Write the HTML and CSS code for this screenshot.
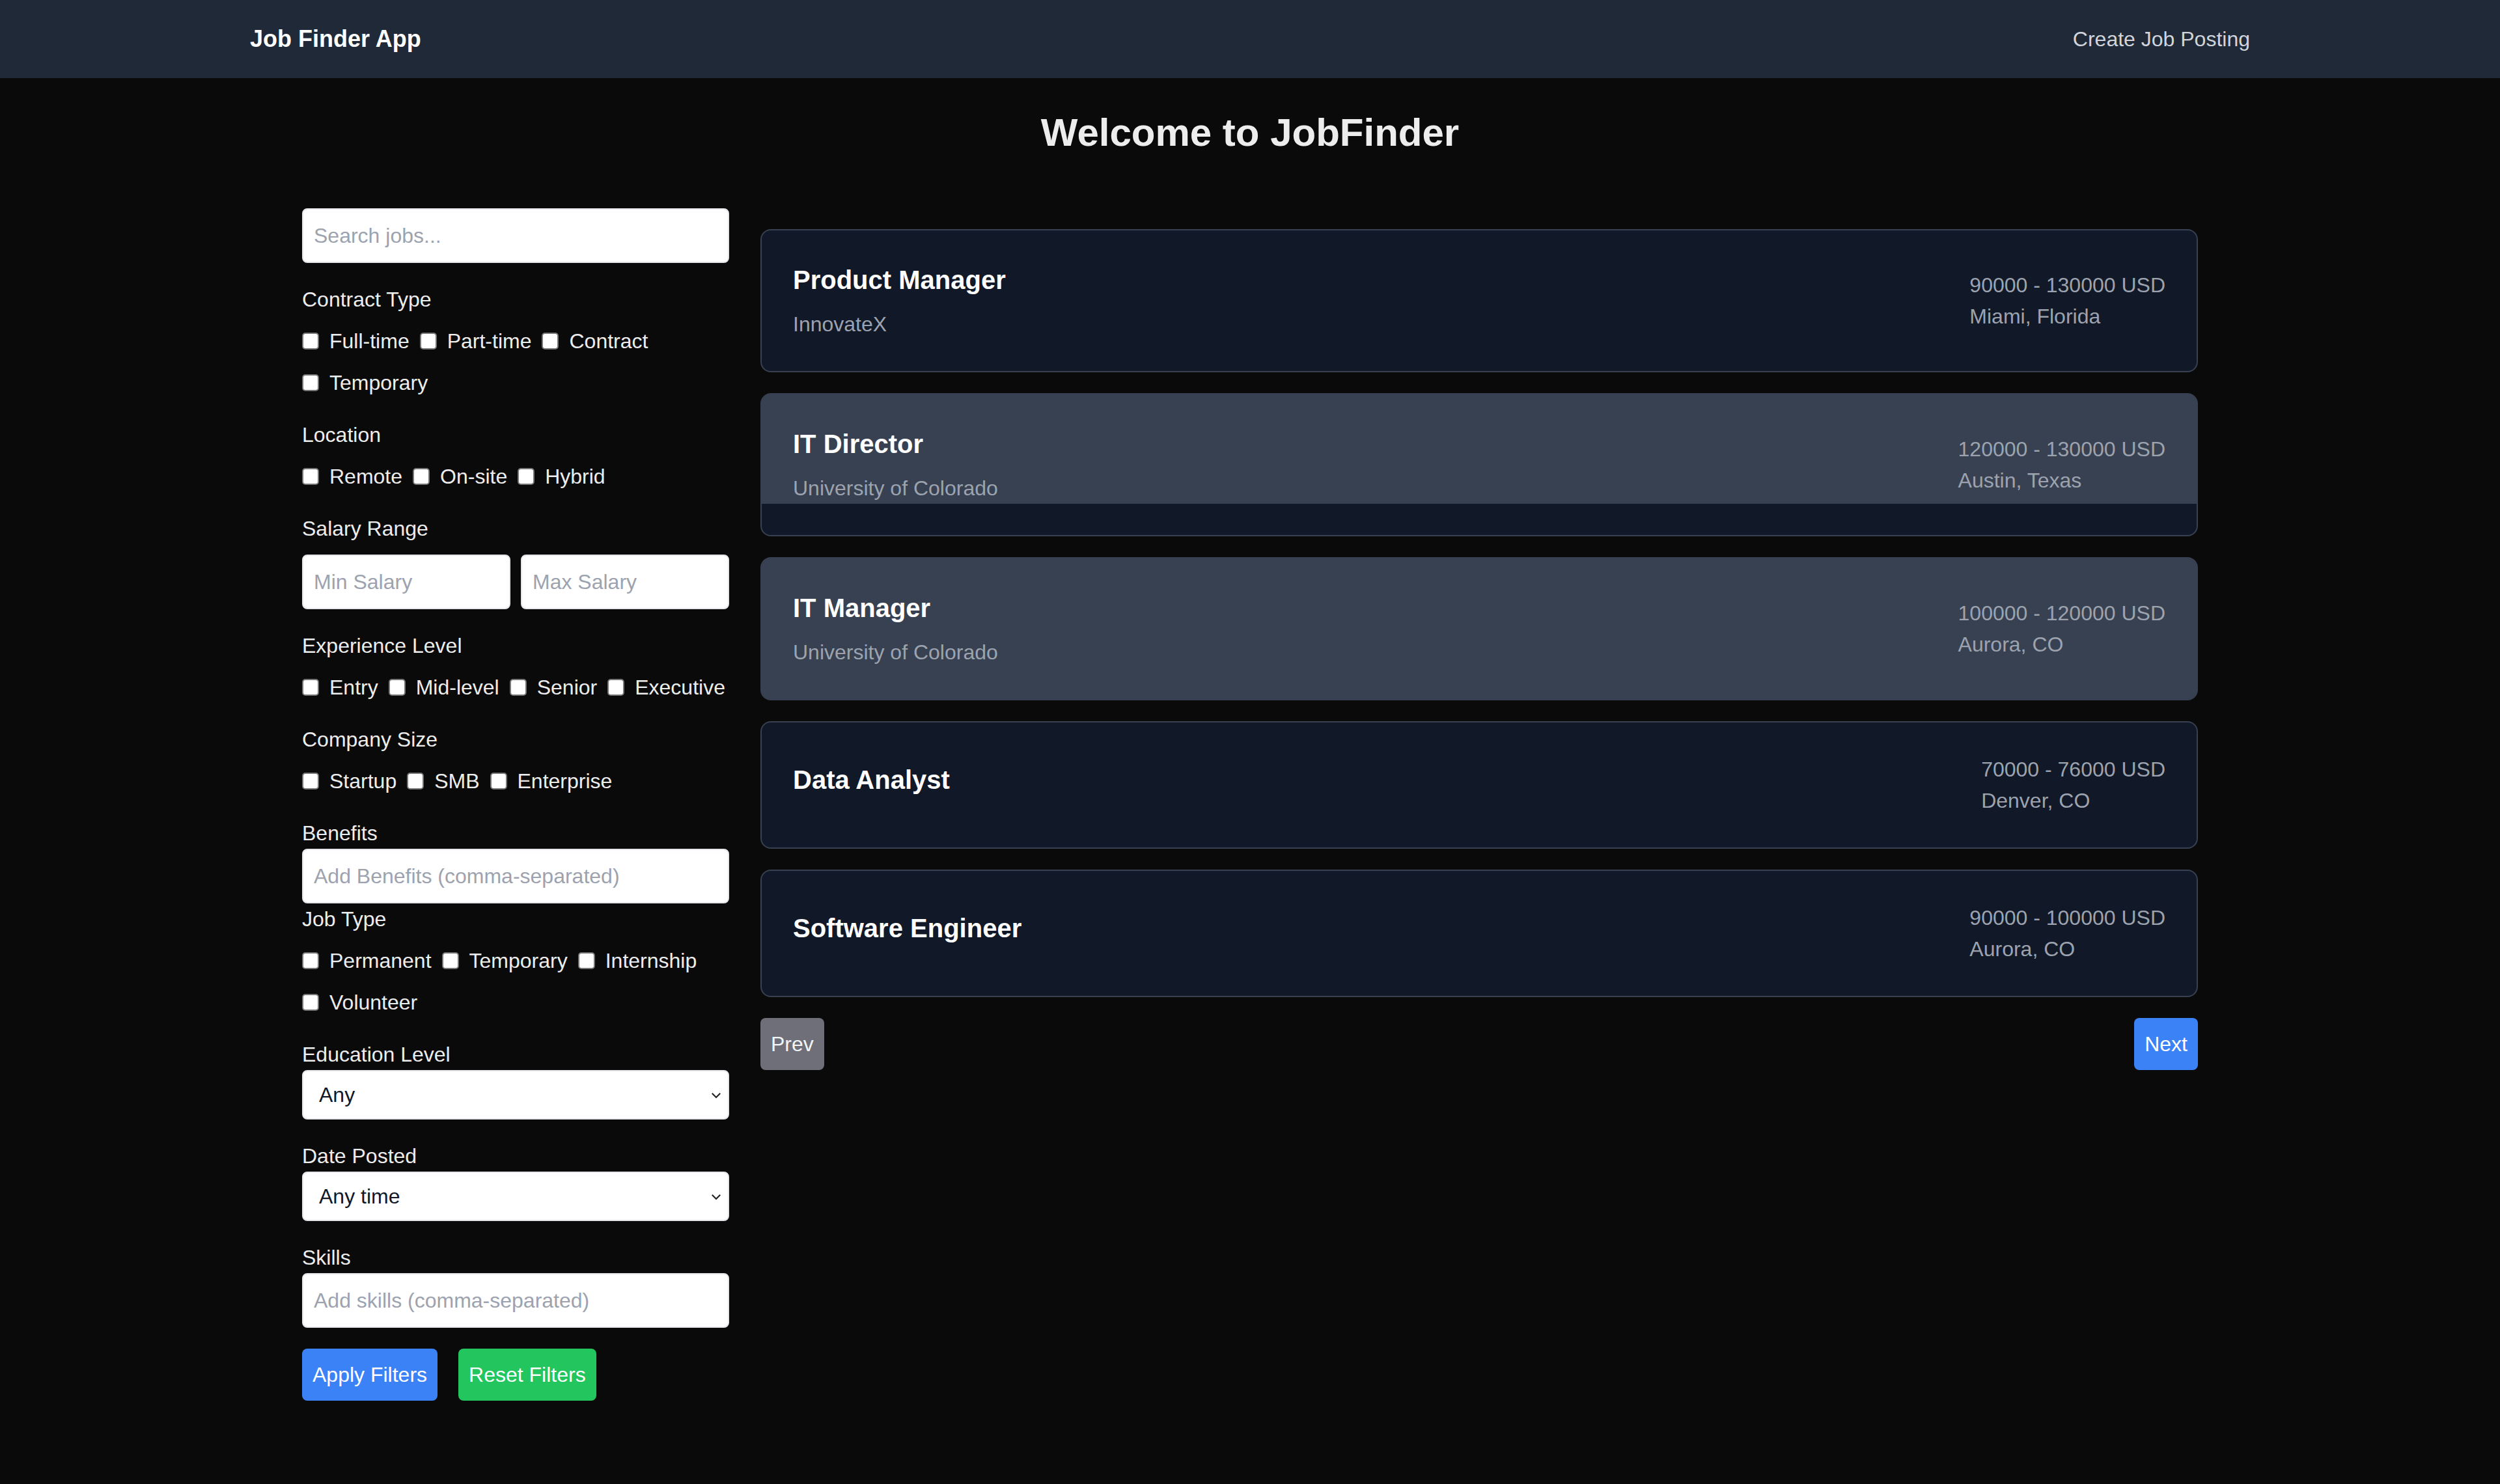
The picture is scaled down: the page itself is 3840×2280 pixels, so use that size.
FILE: index.html
```html
<!DOCTYPE html>
<html lang="en">
<head>
<meta charset="utf-8">
<title>Job Finder App</title>
<link rel="stylesheet" href="styles.css">
</head>
<body>
<nav class="nav">
  <div class="nav-inner">
    <span class="brand">Job Finder App</span>
    <a class="nav-link" href="#">Create Job Posting</a>
  </div>
</nav>
<main class="main">
  <h1 class="title">Welcome to JobFinder</h1>
  <div class="layout">
    <aside class="sidebar">
      <input class="field search" type="text" placeholder="Search jobs...">

      <div class="section">
        <label class="label">Contract Type</label>
        <div class="checks">
          <label class="check"><input type="checkbox">Full-time</label>
          <label class="check"><input type="checkbox">Part-time</label>
          <label class="check"><input type="checkbox">Contract</label>
          <label class="check"><input type="checkbox">Temporary</label>
        </div>
      </div>

      <div class="section">
        <label class="label">Location</label>
        <div class="checks">
          <label class="check"><input type="checkbox">Remote</label>
          <label class="check"><input type="checkbox">On-site</label>
          <label class="check"><input type="checkbox">Hybrid</label>
        </div>
      </div>

      <div class="section">
        <label class="label">Salary Range</label>
        <div class="salary">
          <input class="field" type="number" placeholder="Min Salary">
          <input class="field" type="number" placeholder="Max Salary">
        </div>
      </div>

      <div class="section">
        <label class="label">Experience Level</label>
        <div class="checks">
          <label class="check"><input type="checkbox">Entry</label>
          <label class="check"><input type="checkbox">Mid-level</label>
          <label class="check"><input type="checkbox">Senior</label>
          <label class="check"><input type="checkbox">Executive</label>
        </div>
      </div>

      <div class="section">
        <label class="label">Company Size</label>
        <div class="checks">
          <label class="check"><input type="checkbox">Startup</label>
          <label class="check"><input type="checkbox">SMB</label>
          <label class="check"><input type="checkbox">Enterprise</label>
        </div>
      </div>

      <label class="label tight">Benefits</label>
      <input class="field" type="text" placeholder="Add Benefits (comma-separated)">

      <div class="section">
        <label class="label">Job Type</label>
        <div class="checks">
          <label class="check"><input type="checkbox">Permanent</label>
          <label class="check"><input type="checkbox">Temporary</label>
          <label class="check"><input type="checkbox">Internship</label>
          <label class="check"><input type="checkbox">Volunteer</label>
        </div>
      </div>

      <div class="section">
        <label class="label tight">Education Level</label>
        <select class="select">
          <option>Any</option>
          <option>High School</option>
          <option>Bachelor's</option>
          <option>Master's</option>
          <option>PhD</option>
        </select>
      </div>

      <div class="section">
        <label class="label tight">Date Posted</label>
        <select class="select">
          <option>Any time</option>
          <option>Past 24 hours</option>
          <option>Past week</option>
          <option>Past month</option>
        </select>
      </div>

      <div class="section">
        <label class="label tight">Skills</label>
        <input class="field" type="text" placeholder="Add skills (comma-separated)">
      </div>

      <div class="actions">
        <button class="btn btn-blue">Apply Filters</button>
        <button class="btn btn-green">Reset Filters</button>
      </div>
    </aside>

    <section class="jobs">
      <div class="card">
        <div>
          <h2 class="job-title">Product Manager</h2>
          <p class="company">InnovateX</p>
        </div>
        <div class="meta">
          <p>90000 - 130000 USD</p>
          <p>Miami, Florida</p>
        </div>
      </div>

      <div class="card card-fading">
        <div>
          <h2 class="job-title">IT Director</h2>
          <p class="company">University of Colorado</p>
        </div>
        <div class="meta">
          <p>120000 - 130000 USD</p>
          <p>Austin, Texas</p>
        </div>
      </div>

      <div class="card card-hover">
        <div>
          <h2 class="job-title">IT Manager</h2>
          <p class="company">University of Colorado</p>
        </div>
        <div class="meta">
          <p>100000 - 120000 USD</p>
          <p>Aurora, CO</p>
        </div>
      </div>

      <div class="card">
        <div>
          <h2 class="job-title">Data Analyst</h2>
          <p class="company"></p>
        </div>
        <div class="meta">
          <p>70000 - 76000 USD</p>
          <p>Denver, CO</p>
        </div>
      </div>

      <div class="card">
        <div>
          <h2 class="job-title">Software Engineer</h2>
          <p class="company"></p>
        </div>
        <div class="meta">
          <p>90000 - 100000 USD</p>
          <p>Aurora, CO</p>
        </div>
      </div>

      <div class="pager">
        <button class="btn btn-gray">Prev</button>
        <button class="btn btn-blue">Next</button>
      </div>
    </section>
  </div>
</main>
</body>
</html>
```

FILE: styles.css
```css
* {
  box-sizing: border-box;
  margin: 0;
  padding: 0;
}

html,
body {
  background: #0a0a0a;
}

body {
  color: #ededed;
  font-family: "Liberation Sans", Arial, Helvetica, sans-serif;
  font-size: 32px;
  line-height: 48px;
  min-height: 2280px;
}

/* ---------- nav ---------- */
.nav {
  background: #1f2937;
  padding: 32px 0;
}

.nav-inner {
  max-width: 3072px;
  margin: 0 auto;
  display: flex;
  justify-content: space-between;
  align-items: center;
}

.brand {
  font-size: 36px;
  line-height: 56px;
  font-weight: 700;
  color: #ffffff;
}

.nav-link {
  color: #d1d5db;
  text-decoration: none;
  font-size: 32px;
  line-height: 48px;
}

/* ---------- main ---------- */
.main {
  max-width: 3072px;
  margin: 0 auto;
  padding: 0 80px;
}

.title {
  margin-top: 48px;
  margin-bottom: 80px;
  font-size: 60px;
  line-height: 72px;
  font-weight: 700;
  text-align: center;
  color: #ededed;
}

.layout {
  display: flex;
  align-items: flex-start;
  gap: 48px;
}

/* ---------- sidebar ---------- */
.sidebar {
  width: 656px;
  flex: none;
}

.field {
  display: block;
  width: 100%;
  height: 84px;
  padding: 16px;
  border: 2px solid #e5e7eb;
  border-radius: 8px;
  background: #ffffff;
  color: #111827;
  font-family: inherit;
  font-size: 32px;
  line-height: 48px;
  outline: none;
  -moz-appearance: textfield;
}

.field::-webkit-outer-spin-button,
.field::-webkit-inner-spin-button {
  -webkit-appearance: none;
  margin: 0;
}

.field::placeholder {
  color: #9ca3af;
}

.search {
  margin-bottom: 32px;
}

.section {
  margin-bottom: 32px;
}

.label {
  display: block;
  line-height: 48px;
  margin-bottom: 16px;
}

.label.tight {
  margin-bottom: 0;
}

.checks {
  display: flex;
  flex-wrap: wrap;
  gap: 16px;
}

.check {
  display: inline-flex;
  align-items: center;
  line-height: 48px;
}

.check input {
  -webkit-appearance: none;
  appearance: none;
  width: 26px;
  height: 26px;
  margin-right: 16px;
  background: #ffffff;
  border: 2px solid #767676;
  border-radius: 5px;
  flex: none;
}

.salary {
  display: flex;
  gap: 16px;
}

.salary .field {
  flex: 1;
  min-width: 0;
}

.select {
  display: block;
  width: 100%;
  height: 76px;
  padding: 0 48px 0 24px;
  border: 2px solid #e5e7eb;
  border-radius: 8px;
  background-color: #ffffff;
  background-image: url("data:image/svg+xml,%3Csvg xmlns='http://www.w3.org/2000/svg' width='18' height='12' viewBox='0 0 18 12'%3E%3Cpath d='M2 3l7 7 7-7' fill='none' stroke='%23222' stroke-width='2.4'/%3E%3C/svg%3E");
  background-repeat: no-repeat;
  background-position: right 10px center;
  background-size: 16px 11px;
  -webkit-appearance: none;
  appearance: none;
  color: #111827;
  font-family: inherit;
  font-size: 32px;
  line-height: 48px;
  outline: none;
}

.actions {
  display: flex;
  gap: 32px;
}

/* ---------- buttons ---------- */
.btn {
  border: 0;
  border-radius: 8px;
  padding: 16px;
  font-family: inherit;
  font-size: 32px;
  line-height: 48px;
  color: #ffffff;
  cursor: pointer;
}

.btn-blue {
  background: #3b82f6;
}

.btn-green {
  background: #22c55e;
}

.btn-gray {
  background: #6e6f78;
  color: #f3f4f6;
}

/* ---------- jobs ---------- */
.jobs {
  flex: 1;
  min-width: 0;
  margin-top: 32px;
  display: flex;
  flex-direction: column;
  gap: 32px;
}

.card {
  display: flex;
  justify-content: space-between;
  align-items: center;
  padding: 48px;
  border: 2px solid #374151;
  border-radius: 16px;
  background: #111827;
}

.card-hover {
  background: #374151;
}

.card-fading {
  background-color: #111827;
  background-image: linear-gradient(#374151, #374151);
  background-origin: border-box;
  background-repeat: no-repeat;
  background-position: top left;
  background-size: 100% calc(100% - 50px);
}

.job-title {
  font-size: 40px;
  line-height: 56px;
  font-weight: 700;
  color: #ffffff;
}

.company {
  margin-top: 16px;
  color: #9ca3af;
}

.company:empty {
  height: 0;
}

.meta {
  color: #9ca3af;
}

.pager {
  display: flex;
  justify-content: space-between;
}
```
